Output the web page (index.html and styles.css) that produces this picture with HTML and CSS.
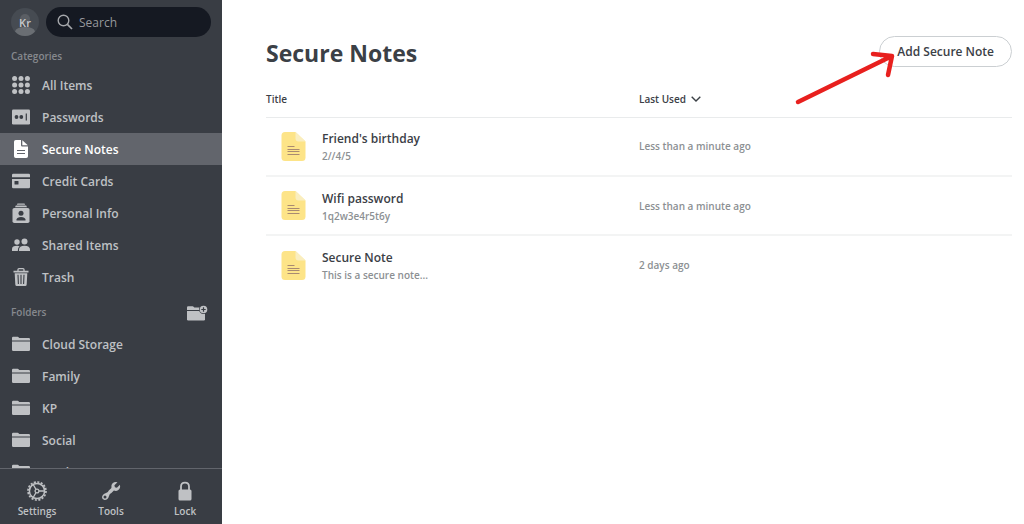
FILE: index.html
```html
<!DOCTYPE html>
<html lang="en">
<head>
<meta charset="utf-8">
<meta name="viewport" content="width=device-width, initial-scale=1">
<title>Secure Notes</title>
<link rel="stylesheet" href="styles.css">
</head>
<body>
<svg class="defs" aria-hidden="true">
  <symbol id="folder" viewBox="0 0 18 15"><path d="M0 1.4Q0 .3 1.1.3H5.6Q6.3.3 6.8 1L7.3 1.6H16.8Q18 1.6 18 2.8V4.1H0Z"/><path d="M0 5H18V13.2Q18 14.4 16.8 14.4H1.2Q0 14.4 0 13.2Z"/></symbol>
  <symbol id="note" viewBox="0 0 24 29"><path fill="#fde488" d="M3.5 0H14L24 9.5V25.5Q24 29 20.5 29H3.5Q0 29 0 25.5V3.5Q0 0 3.5 0Z"/><path fill="#faeebf" d="M14 0 24 9.5H17Q14 9.5 14 6.5Z"/><path fill="none" stroke="#a98a72" stroke-width="1" d="M6 14.5H13M6 17.5H18M6 19.5H18M6 22.5H18"/></symbol>
</svg>
<div class="app">
  <aside class="sidebar">
    <div class="topbar">
      <div class="avatar">
        <svg viewBox="0 0 28 28" width="28" height="28" aria-hidden="true"><circle cx="14" cy="14" r="14" fill="#464b52"/><circle cx="14" cy="11" r="5" fill="#5a5e64"/><path fill="#6a6e73" d="M4 23.5Q5 19 14 19T24 23.5Q20 28 14 28T4 23.5Z"/></svg>
        <span class="initials">Kr</span>
      </div>
      <label class="search">
        <svg class="search-icon" viewBox="0 0 16 16" width="16" height="16" fill="none" stroke="#a5a7ab" stroke-width="1.4" aria-hidden="true"><circle cx="6.5" cy="6.5" r="5.3"/><path stroke-width="1.7" d="m10.4 10.4 4.6 4.6"/></svg>
        <input class="search-input" type="search" placeholder="Search" aria-label="Search">
      </label>
    </div>
    <div class="scroller">
      <h2 class="section">Categories</h2>
      <nav class="list" aria-label="Categories">
        <a class="item" href="#"><svg class="icon" viewBox="0 0 18 18"><circle cx="2.6" cy="2.6" r="2.5"/><circle cx="9" cy="2.6" r="2.5"/><circle cx="15.4" cy="2.6" r="2.5"/><circle cx="2.6" cy="9" r="2.5"/><circle cx="9" cy="9" r="2.5"/><circle cx="15.4" cy="9" r="2.5"/><circle cx="2.6" cy="15.4" r="2.5"/><circle cx="9" cy="15.4" r="2.5"/><circle cx="15.4" cy="15.4" r="2.5"/></svg>All Items</a>
        <a class="item" href="#"><svg class="icon" viewBox="0 0 18 18"><rect y="1.5" width="18" height="15" rx="1.3"/><g fill="#393d44"><circle cx="4.5" cy="9" r="1.9"/><circle cx="9.3" cy="9" r="1.9"/><rect x="13.7" y="5.5" width="1.2" height="7"/></g></svg>Passwords</a>
        <a class="item active" href="#" aria-current="page"><svg class="icon" viewBox="0 0 18 18"><path d="M3.8 0H9V5.2Q9 6.4 10.2 6.4H16V16.2Q16 18 14.2 18H3.8Q2 18 2 16.2V1.8Q2 0 3.8 0Z"/><path d="M10.3.2 15.8 5.3H10.3Z"/><path stroke="#62656c" d="M5 10.5H13M5 13.5H13"/></svg>Secure Notes</a>
        <a class="item" href="#"><svg class="icon" viewBox="0 0 18 18"><path d="M1.2 1.8H16.8Q18 1.8 18 3V5.2H0V3Q0 1.8 1.2 1.8Z"/><path d="M0 7H18V15Q18 16.2 16.8 16.2H1.2Q0 16.2 0 15Z"/><rect x="2.5" y="9" width="4" height="3.5" rx=".6" fill="#393d44"/></svg>Credit Cards</a>
        <a class="item" href="#"><svg class="icon tall" viewBox="0 0 18 20"><path d="M5.5.5H12.5L13.2 1.8H4.8ZM3.8 2.6H14.2L15 4.2H3Z"/><rect x=".5" y="5" width="17" height="15" rx="1.8"/><g fill="#393d44"><circle cx="9" cy="10.2" r="2.5"/><path d="M4.5 17.5V16.5Q5 14 9 14T13.5 16.5V17.5Z"/></g></svg>Personal Info</a>
        <a class="item" href="#"><svg class="icon" viewBox="0 0 18 18"><circle cx="5" cy="6" r="2.7"/><circle cx="12.5" cy="5.5" r="3"/><path d="M0 15V13Q0 9.8 5.2 9.8Q6.5 9.8 7.6 10.2Q5.8 11.5 5.8 15Z"/><path d="M7 15V13.5Q7 9.7 12.5 9.7T18 13.5V15Z"/></svg>Shared Items</a>
        <a class="item" href="#"><svg class="icon" viewBox="0 0 18 18"><path fill="none" stroke="currentColor" stroke-width="1.3" d="M6 3V1.6Q6 .7 7 .7H11Q12 .7 12 1.6V3"/><path d="M1.5 2.8H16.5V4.4H1.5ZM2.7 5.2H15.3L14.7 16.5Q14.6 18 13.2 18H4.8Q3.4 18 3.3 16.5Z"/><path stroke="#393d44" stroke-width="1.1" d="M6 6.7 6.4 16M9 6.7V16M12 6.7 11.6 16"/></svg>Trash</a>
      </nav>
      <div class="folders-head">
        <h2 class="section">Folders</h2>
        <button class="add-folder" type="button" aria-label="New folder"><svg viewBox="0 0 21 16" width="21" height="16"><use href="#folder" y="1" width="18" height="15"/><circle cx="16.5" cy="4.5" r="4.5" fill="#393d44"/><circle cx="16.5" cy="4.5" r="3.8"/><path stroke="#393d44" stroke-width="1.2" d="M16.5 2.3V6.7M14.3 4.5H18.7"/></svg></button>
      </div>
      <nav class="list" aria-label="Folders">
        <a class="item" href="#"><svg class="icon"><use href="#folder"/></svg>Cloud Storage</a>
        <a class="item" href="#"><svg class="icon"><use href="#folder"/></svg>Family</a>
        <a class="item" href="#"><svg class="icon"><use href="#folder"/></svg>KP</a>
        <a class="item" href="#"><svg class="icon"><use href="#folder"/></svg>Social</a>
        <a class="item" href="#"><svg class="icon"><use href="#folder"/></svg>Work</a>
      </nav>
    </div>
    <footer class="toolbar">
      <button class="tool" type="button"><svg viewBox="0 0 20 20" width="20" height="20" fill="none" stroke="currentColor"><circle cx="10" cy="10" r="9" stroke-width="1.7" stroke-dasharray="2.1 1.434"/><circle cx="10" cy="10" r="7.6" stroke-width="1.5"/><circle cx="10" cy="10" r="1.9" stroke-width="1.3"/><path stroke-width="1.3" d="M12 10H17.5M9 8.3 6.2 3.5M9 11.7 6.2 16.5"/></svg>Settings</button>
      <button class="tool" type="button"><svg viewBox="0 0 20 20" width="20" height="20"><path fill-rule="evenodd" d="M16.5 1.3 13.4 4.3 13.9 6.3 15.9 6.8 18.9 3.8Q19.8 7.3 17.3 9.1Q15.3 10.5 12.9 9.6L10.4 12.1Q8.5 12.5 8 15Q7 19 3.5 19Q1 18.5 1 16.2Q1.2 13.4 5 12Q7.3 11.4 7.8 9.5L10.4 7Q9.6 4 11.6 2.2Q13.8.4 16.5 1.3ZM4 14.6A1.5 1.5 0 1 0 4 17.6A1.5 1.5 0 1 0 4 14.6Z"/></svg>Tools</button>
      <button class="tool" type="button"><svg viewBox="0 0 20 20" width="20" height="20"><rect x="3.5" y="8.5" width="13" height="11" rx="1.5"/><path fill="none" stroke="currentColor" stroke-width="1.8" d="M6 9V5.5Q6 1.7 10 1.7T14 5.5V9"/></svg>Lock</button>
    </footer>
  </aside>
  <main class="main">
    <header class="head">
      <h1 class="title">Secure Notes</h1>
      <div class="action">
        <button class="add" type="button">Add Secure Note</button>
        <svg class="arrow" viewBox="0 0 104 60" width="104" height="60" aria-hidden="true"><path fill="none" stroke="#e8201e" stroke-width="4.5" stroke-linecap="round" stroke-linejoin="round" d="M4 53 98 7M79 5 98 7 94 26"/></svg>
      </div>
    </header>
    <table class="notes">
      <thead>
        <tr><th scope="col">Title</th><th scope="col" aria-sort="descending"><button class="sort" type="button">Last Used<svg viewBox="0 0 10 6" width="10" height="6" fill="none" stroke="currentColor" stroke-width="1.4" aria-hidden="true"><path d="M.7.7 5 5 9.3.7"/></svg></button></th></tr>
      </thead>
      <tbody>
        <tr><td><div class="note"><svg class="note-icon"><use href="#note"/></svg><div class="text"><div class="name">Friend's birthday</div><div class="detail">2//4/5</div></div></div></td><td class="used">Less than a minute ago</td></tr>
        <tr><td><div class="note"><svg class="note-icon"><use href="#note"/></svg><div class="text"><div class="name">Wifi password</div><div class="detail">1q2w3e4r5t6y</div></div></div></td><td class="used">Less than a minute ago</td></tr>
        <tr><td><div class="note"><svg class="note-icon"><use href="#note"/></svg><div class="text"><div class="name">Secure Note</div><div class="detail">This is a secure note...</div></div></div></td><td class="used">2 days ago</td></tr>
      </tbody>
    </table>
  </main>
</div>
</body>
</html>
```
FILE: styles.css
```css
* { box-sizing: border-box; }

body {
  margin: 0;
  font-family: "Open Sans", "Noto Sans", sans-serif;
  font-size: 12px;
  font-weight: 600;
  color: #3b4046;
  background: #fff;
}

button {
  font: inherit;
  color: inherit;
  background: none;
  border: 0;
  padding: 0;
}

.defs { position: absolute; width: 0; height: 0; }

.app { display: flex; height: 100vh; }

.sidebar {
  display: flex;
  flex-direction: column;
  flex: 0 0 222px;
  min-width: 0;
  background: #393d44;
  color: #bfc1c4;
  fill: #bfc1c4;
}

.topbar {
  display: flex;
  align-items: center;
  gap: 7px;
  padding: 7px 11px;
}

.avatar { display: grid; place-items: center; }
.avatar > * { grid-area: 1 / 1; }
.initials { font-size: 11px; color: #c9cacc; }

.search {
  flex: 1;
  min-width: 0;
  display: flex;
  align-items: center;
  gap: 6px;
  height: 30px;
  padding: 0 11px;
  border-radius: 15px;
  background: #151922;
}
.search-icon { flex: none; }

.search-input {
  width: 100%;
  min-width: 0;
  padding: 0;
  border: 0;
  outline: 0;
  background: none;
  font: inherit;
  font-weight: 500;
  color: #bfc1c4;
}
.search-input::placeholder { color: #96989c; opacity: 1; }

.scroller { flex: 1; min-height: 0; overflow: hidden; }

.section {
  margin: 0;
  padding: 4px 11px 5px;
  font-size: 10px;
  line-height: 16px;
  font-weight: 600;
  color: #86898e;
}

.list { display: flex; flex-direction: column; }

.item {
  display: flex;
  align-items: center;
  gap: 12px;
  height: 32px;
  padding: 0 12px;
  color: inherit;
  text-decoration: none;
}
.item.active {
  color: #fff;
  fill: #fff;
  background: #62656c;
}

.icon { width: 18px; height: 18px; flex: none; }
.icon.tall { height: 20px; }

.folders-head {
  display: flex;
  align-items: center;
  justify-content: space-between;
  height: 35px;
  padding: 4px 14px 0 0;
}
.add-folder { display: flex; fill: inherit; }

.toolbar {
  display: grid;
  grid-template-columns: repeat(3, 1fr);
  height: 56px;
  border-top: 1px solid #62656c;
}
.tool {
  display: flex;
  flex-direction: column;
  align-items: center;
  justify-content: center;
  gap: 2px;
  padding-top: 6px;
  font-size: 10px;
  line-height: 16px;
  fill: inherit;
}

.main { flex: 1; min-width: 0; padding: 36px 12px 0 44px; }

.head {
  display: flex;
  align-items: flex-start;
  justify-content: space-between;
}
.title { margin: 0; font-size: 23px; line-height: 34px; font-weight: 700; }

.action { position: relative; }
.add {
  height: 31px;
  padding: 0 17px;
  border: 1px solid #cbcfd2;
  border-radius: 16px;
}
.arrow { position: absolute; right: 114px; top: 13px; }

.notes {
  width: 100%;
  margin-top: 11px;
  border-collapse: collapse;
  table-layout: fixed;
  text-align: left;
}
th {
  height: 36px;
  padding: 0;
  border-bottom: 1px solid #e9ebec;
  font-size: 10px;
  font-weight: 600;
}
.sort { display: flex; align-items: center; gap: 5px; }
td { height: 59px; padding: 0; }
tbody tr + tr { border-top: 2px solid #f3f4f4; }

.note { display: flex; align-items: center; gap: 16px; padding-left: 15px; }
.note-icon { width: 25px; height: 29px; flex: none; }
.text { padding-top: 3px; }
.name { line-height: 18px; }
.detail { font-size: 10px; line-height: 17px; color: #8c9093; }
.used { font-size: 10px; color: #8c9093; }
```
